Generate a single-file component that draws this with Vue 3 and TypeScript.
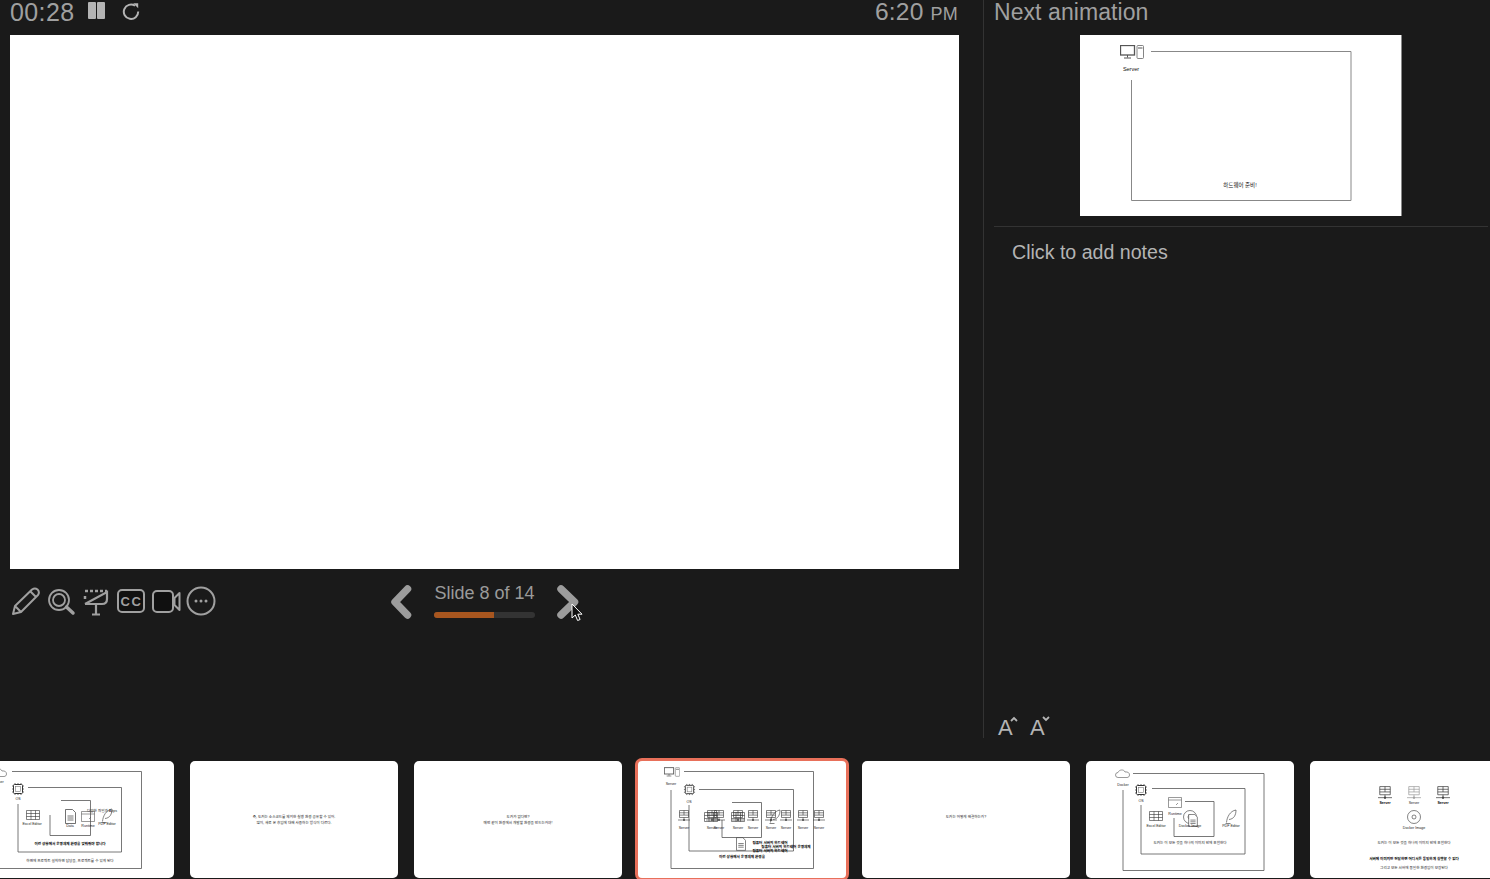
<script setup lang="ts">
const plainSlides = [
  { lines: ['즉, 도커는 소스코드를 제외한 실행 환경 공유할 수 있어.', '많이, 새로 온 후임에 대해 사용하는 방식이 다르다.'] },
  { lines: ['도커가 없다면?', '매번 같이 환경에서 개발할 환경을 만드는거야!'] },
]
const stackedServers = [40, 68, 75, 94, 109, 127, 142, 159, 175]
</script>

<template>
  <div class="presenter">
    <!-- shared icons for the slide thumbnails -->
    <svg class="defs" width="0" height="0" aria-hidden="true">
      <symbol id="monitor" viewBox="0 0 24 14">
        <rect x="0.5" y="0.5" width="14" height="9.5" fill="none" stroke="#555" stroke-width="1.3" />
        <path d="M7.5 10v2.5M4 13h7" stroke="#555" fill="none" />
        <rect x="17" y="0.5" width="6.5" height="13" rx="1" fill="none" stroke="#666" stroke-width="0.8" />
        <path d="M18 3h4.5" stroke="#555" />
      </symbol>
      <symbol id="chip" viewBox="0 0 14 14">
        <rect x="2.5" y="2.5" width="9" height="9" rx="1" fill="none" stroke="#333" />
        <rect x="4.5" y="4.5" width="5" height="5" fill="none" stroke="#777" stroke-width="0.6" />
        <path d="M1 4h1M1 7h1M1 10h1M12 4h1M12 7h1M12 10h1M4 1v1M7 1v1M10 1v1M4 12v1M7 12v1M10 12v1" stroke="#333" stroke-width="0.7" />
      </symbol>
      <symbol id="grid" viewBox="0 0 14 10">
        <path d="M.5.5h13v9H.5zM.5 3.500h13M.5 6.500h13M5 .5v9M9.500.5v9" fill="none" stroke="#333" stroke-width="0.6" />
      </symbol>
      <symbol id="doc" viewBox="0 0 11 15">
        <path d="M.5.5h7l3 3v11H.5z" fill="#fff" stroke="#333" stroke-width="0.7" />
        <path d="M2.500 7h6M2.500 9h6M2.500 11h6" stroke="#666" stroke-width="0.9" />
      </symbol>
      <symbol id="window" viewBox="0 0 14 11">
        <path d="M.5.5h13v10H.5zM.5 3h13" fill="none" stroke="#555" stroke-width="0.6" />
        <path d="M8 8l2-2" stroke="#555" stroke-width="0.6" />
      </symbol>
      <symbol id="feather" viewBox="0 0 12 15">
        <path d="M1.500 13.500C2 8 5 2 11 1c0 5-2 9-7 9.500M0.500 14.500h5" fill="none" stroke="#333" stroke-width="0.6" />
      </symbol>
      <symbol id="cloud" viewBox="0 0 15 9">
        <path d="M3 8.500a2.500 2.500 0 0 1 0-5C4 .5 9 0 10 3c3-.5 4.500 1 4.500 3 0 1.500-1 2.500-2.500 2.500z" fill="none" stroke="#555" stroke-width="0.6" />
      </symbol>
      <symbol id="disc" viewBox="0 0 14 14">
        <circle cx="7" cy="7" r="6.500" fill="none" stroke="#333" stroke-width="0.6" />
        <circle cx="7" cy="7" r="2" fill="none" stroke="#333" stroke-width="0.6" />
      </symbol>
      <symbol id="server" viewBox="0 0 12 12">
        <path d="M1.500.5h9v7h-9zM1.500 2.800h9M1.500 5.100h9M6 .5v4.600M6 7.500v2M0 10h12" fill="none" stroke="#333" stroke-width="0.6" />
        <circle cx="6" cy="10" r="1" fill="#444" />
      </symbol>
    </svg>

    <div class="main">
      <section class="stage">
        <header class="stage-head">
          <div class="timer">
            <span class="clock">00:28</span>
            <span class="pause"><i></i><i></i></span>
            <svg class="restart" width="18" height="18" viewBox="0 0 20 20">
              <path d="M14.500 4.200A8 8 0 1 0 18 10.500" fill="none" stroke="#b4b4b4" stroke-width="2.200" />
              <path d="M12.500 1.500h5.500v5.500z" fill="#b4b4b4" />
            </svg>
          </div>
          <div class="time">6:20 <small>PM</small></div>
        </header>

        <div class="slide"></div>

        <div class="controls">
          <div class="tools">
            <svg width="30" height="32" viewBox="0 0 30 32">
              <path d="M2 29l2-8L21 4.500q3-2 5.500 0 2.500 2.500.5 5.500L10 27zM19.500 6.500l5.500 5.500M4 21l6 6" fill="#1a1a1a" stroke="#a0a0a0" stroke-width="2" stroke-linejoin="round" />
            </svg>
            <svg width="30" height="32" viewBox="0 0 30 32">
              <circle cx="13" cy="15" r="10" fill="none" stroke="#a0a0a0" stroke-width="1.800" />
              <circle cx="13" cy="15" r="6" fill="none" stroke="#a0a0a0" stroke-width="1.800" />
              <path d="M20.500 22l6.500 6" stroke="#a0a0a0" stroke-width="3.500" stroke-linecap="round" />
            </svg>
            <svg width="30" height="32" viewBox="0 0 30 32">
              <path d="M4 6h22M4 11v3" fill="none" stroke="#a0a0a0" stroke-width="2.500" stroke-dasharray="3 2" />
              <path d="M4 19L26 7v7q0 5-5 5H4M15 19v10M11 29.500h8" fill="none" stroke="#a0a0a0" stroke-width="2.200" />
            </svg>
            <svg width="30" height="32" viewBox="0 0 30 32">
              <rect x="2" y="5" width="26" height="22" rx="4" fill="#111" stroke="#a0a0a0" stroke-width="2" />
              <text class="cc" x="15.500" y="20.500" text-anchor="middle">CC</text>
            </svg>
            <svg width="30" height="32" viewBox="0 0 30 32">
              <rect x="2" y="6" width="20" height="21" rx="4" fill="#101010" stroke="#a0a0a0" stroke-width="2" />
              <path d="M23.500 13l5-5v17l-5-5z" fill="#101010" stroke="#a0a0a0" stroke-width="2" stroke-linejoin="round" />
            </svg>
            <svg width="30" height="32" viewBox="0 0 30 32">
              <circle cx="15" cy="16" r="13.500" fill="none" stroke="#a0a0a0" stroke-width="2" />
              <circle cx="10" cy="16" r="1.500" fill="#a0a0a0" />
              <circle cx="15" cy="16" r="1.500" fill="#a0a0a0" />
              <circle cx="20" cy="16" r="1.500" fill="#a0a0a0" />
            </svg>
          </div>

          <nav class="pager">
            <svg width="24" height="36" viewBox="0 0 24 36">
              <path d="M17.500 5L5 18l12.500 13" fill="none" stroke="#9c9c9c" stroke-width="7.500" stroke-linecap="round" stroke-linejoin="round" />
            </svg>
            <div class="progress">
              <div class="progress-label">Slide 8 of 14</div>
              <div class="progress-track"><div class="progress-fill"></div></div>
            </div>
            <svg class="next-arrow" width="24" height="36" viewBox="0 0 24 36">
              <path d="M5 5l13.500 13L5 31" fill="none" stroke="#9c9c9c" stroke-width="7.500" stroke-linecap="round" stroke-linejoin="round" />
            </svg>
            <svg class="cursor" width="13" height="19" viewBox="0 0 13 19">
              <path d="M1 1v14l3.300-3 2.300 5.500 2.500-1-2.300-5.300H11z" fill="#111" stroke="#fff" stroke-width="1" />
            </svg>
          </nav>
        </div>
      </section>

      <aside class="side">
        <div class="side-title">Next animation</div>
        <svg class="next" width="322" height="181" viewBox="0 0 322 181">
          <rect width="322" height="181" fill="#fff" />
          <path d="M321.500 0v181" stroke="#888" />
          <use href="#monitor" x="40" y="10" width="24" height="14" />
          <text class="next-text" x="51" y="36" text-anchor="middle">Server</text>
          <path d="M71 16.500h200V165.500H51.500V45" fill="none" stroke="#888" />
          <text class="next-text" x="160" y="152" text-anchor="middle">하드웨어 준비!</text>
        </svg>
        <div class="notes">Click to add notes</div>
        <div class="font-sizes">
          <span class="font-btn">A<svg width="8" height="6" viewBox="0 0 8 6"><path d="M1 5l3-3 3 3" fill="none" stroke="#b4b4b4" stroke-width="1.800" /></svg></span>
          <span class="font-btn">A<svg width="8" height="6" viewBox="0 0 8 6"><path d="M1 1l3 3 3-3" fill="none" stroke="#b4b4b4" stroke-width="1.800" /></svg></span>
        </div>
      </aside>
    </div>

    <div class="film">
      <!-- 6 -->
      <svg class="thumb" viewBox="0 0 208 117">
        <use href="#cloud" x="26" y="7" width="15" height="9" />
        <text class="t" x="32" y="22" text-anchor="middle">Docker</text>
        <path d="M46 10.500h129.500v97H18M62 26.500h93.500v64.500H52V43M95 39.500h29.500v35H84V54" fill="none" stroke="#555" stroke-width="0.8" />
        <use href="#chip" x="45" y="21" width="14" height="14" />
        <text class="t" x="52" y="39" text-anchor="middle">OS</text>
        <use href="#grid" x="60" y="49" width="14" height="10" />
        <text class="t" x="66" y="64" text-anchor="middle">Excel Editor</text>
        <use href="#doc" x="99" y="48" width="11" height="15" />
        <text class="t" x="104" y="66" text-anchor="middle">Data</text>
        <use href="#window" x="115" y="50" width="14" height="11" />
        <text class="t" x="122" y="66" text-anchor="middle">Runtime</text>
        <use href="#feather" x="135" y="47" width="12" height="15" />
        <text class="t" x="141" y="64" text-anchor="middle">PDF Editor</text>
        <text class="t" x="136" y="51" text-anchor="middle">다양한 파일과 Apps</text>
        <text class="t bold" x="104" y="84" text-anchor="middle">이런 상황에서 운영체제 환경을 맞춰줘야 합니다</text>
        <text class="t" x="104" y="101" text-anchor="middle">하면에 프로젝트 설치하면 담당을, 프로젝트를 수 있게 된다</text>
      </svg>

      <svg v-for="(s, i) in plainSlides" :key="i" class="thumb" viewBox="0 0 208 117">
        <text class="t" x="104" y="57" text-anchor="middle">{{ s.lines[0] }}</text>
        <text class="t" x="104" y="63" text-anchor="middle">{{ s.lines[1] }}</text>
      </svg>

      <!-- current slide -->
      <svg class="thumb current" viewBox="0 0 208 117">
        <use href="#monitor" x="26" y="6" width="16" height="10" />
        <text class="t" x="33" y="24" text-anchor="middle">Server</text>
        <path d="M46 10.500h129.500v97H33V29M61 28.500h94.500v61.500H51V44M94 41.500h29.500v35H84V59" fill="none" stroke="#555" stroke-width="0.8" />
        <use href="#chip" x="45" y="22" width="13" height="13" />
        <text class="t" x="51" y="42" text-anchor="middle">OS</text>
        <template v-for="x in stackedServers" :key="x">
          <use href="#server" :x="x" y="49" width="12" height="12" />
          <text class="t" :x="x + 6" y="68" text-anchor="middle">Server</text>
        </template>
        <use href="#grid" x="66" y="51" width="14" height="10" />
        <use href="#grid" x="93" y="51" width="14" height="10" />
        <use href="#feather" x="131" y="48" width="12" height="15" />
        <use href="#doc" x="98" y="76" width="10" height="14" />
        <text class="t bold" x="132" y="83" text-anchor="middle">컴퓨터 서버의 하드웨어</text>
        <text class="t bold" x="148" y="87" text-anchor="middle">컴퓨터 서버의 하드웨어 운영체제</text>
        <text class="t bold" x="132" y="91" text-anchor="middle">컴퓨터 서버의 하드웨어</text>
        <text class="t bold" x="104" y="97" text-anchor="middle">이런 상황에서 운영체제 환경을</text>
      </svg>

      <svg class="thumb" viewBox="0 0 208 117">
        <text class="t" x="104" y="57" text-anchor="middle">도커는 어떻게 해결하는가?</text>
      </svg>

      <svg class="thumb" viewBox="0 0 208 117">
        <use href="#cloud" x="29" y="8" width="15" height="9" />
        <text class="t" x="37" y="25" text-anchor="middle">Docker</text>
        <path d="M47 12.500h131v97H37V29M66 27.500h93v65.500H55V44M99 40.500h29v35H88V57" fill="none" stroke="#555" stroke-width="0.8" />
        <use href="#chip" x="48" y="22" width="14" height="14" />
        <text class="t" x="55" y="41" text-anchor="middle">OS</text>
        <use href="#window" x="82" y="36" width="14" height="11" />
        <text class="t" x="89" y="54" text-anchor="middle">Runtime</text>
        <use href="#grid" x="63" y="50" width="14" height="10" />
        <text class="t" x="70" y="66" text-anchor="middle">Excel Editor</text>
        <use href="#disc" x="97" y="49" width="14" height="14" />
        <use href="#doc" x="102" y="53" width="10" height="13" />
        <text class="t" x="104" y="66" text-anchor="middle">Docker Image</text>
        <use href="#feather" x="139" y="48" width="12" height="15" />
        <text class="t" x="145" y="66" text-anchor="middle">PDF Editor</text>
        <text class="t" x="104" y="83" text-anchor="middle">도커는 이 모든 것을 하나의 이미지 안에 포함한다</text>
      </svg>

      <svg class="thumb" viewBox="0 0 208 117">
        <use href="#server" x="68" y="25" width="14" height="14" />
        <use href="#server" class="faded" x="97" y="25" width="14" height="14" />
        <use href="#server" x="126" y="25" width="14" height="14" />
        <text class="t bold" x="75" y="43" text-anchor="middle">Server</text>
        <text class="t" x="104" y="43" text-anchor="middle">Server</text>
        <text class="t bold" x="133" y="43" text-anchor="middle">Server</text>
        <use href="#disc" x="97" y="49" width="14" height="14" />
        <text class="t" x="104" y="68" text-anchor="middle">Docker Image</text>
        <text class="t" x="104" y="83" text-anchor="middle">도커는 이 모든 것을 하나의 이미지 안에 포함한다</text>
        <text class="t bold" x="104" y="99" text-anchor="middle">서버에 이미지만 전달하면 어디서든 동일하게 실행할 수 있다</text>
        <text class="t" x="104" y="108" text-anchor="middle">그리고 모든 서버에 동일한 환경임이 보장된다</text>
      </svg>
    </div>
  </div>
</template>

<style scoped>
.presenter {
  width: 1490px;
  height: 879px;
  background: #1a1a1a;
  display: flex;
  flex-direction: column;
  overflow: hidden;
  font-family: "Liberation Sans", "Noto Sans CJK KR", sans-serif;
  color: #a0a0a0;
}

.defs {
  position: absolute;
}

.main {
  display: flex;
  height: 738px;
}

.stage {
  width: 984px;
  flex: none;
  box-sizing: border-box;
  border-right: 1px solid #333;
}

.stage-head {
  height: 35px;
  box-sizing: border-box;
  padding: 0 25px 0 10px;
  display: flex;
  justify-content: space-between;
  align-items: flex-start;
}

.timer {
  display: flex;
  align-items: center;
  height: 24px;
}

.clock {
  font-size: 25px;
  letter-spacing: 0.4px;
  line-height: 24px;
  width: 78px;
}

.pause {
  display: flex;
  gap: 1px;
  width: 34px;
  margin-top: -3px;
}

.pause i {
  width: 8px;
  height: 17px;
  border-radius: 1px;
  background: #b4b4b4;
}

.restart {
  margin-top: -3px;
}

.time {
  font-size: 24.600px;
  letter-spacing: 0.2px;
  line-height: 24px;
}

.time small {
  font-size: 18px;
}

.slide {
  width: 949px;
  height: 534px;
  margin-left: 10px;
  background: #fff;
}

.controls {
  display: flex;
  padding: 15px 0 0 11px;
}

.tools {
  display: flex;
  gap: 5px;
  margin-top: 1px;
  height: 32px;
}

.cc {
  font-size: 13px;
  font-weight: 700;
  letter-spacing: 1.5px;
  fill: #a0a0a0;
}

.pager {
  position: relative;
  display: flex;
  gap: 20px;
  margin-left: 174px;
}

.progress {
  width: 101px;
}

.next-arrow {
  margin-left: 1px;
}

.progress-label {
  font-size: 18px;
  line-height: 18px;
  text-align: center;
  white-space: nowrap;
  color: #9a9a9a;
}

.progress-track {
  margin-top: 10px;
  height: 6px;
  border-radius: 3px;
  background: #333;
  overflow: hidden;
}

.progress-fill {
  width: 60px;
  height: 100%;
  background: #a8561f;
}

.cursor {
  position: absolute;
  left: 181px;
  top: 19px;
}

.side {
  flex: 1;
  padding-left: 10px;
  display: flex;
  flex-direction: column;
}

.side-title {
  height: 35px;
  font-size: 23px;
  letter-spacing: 0.07px;
  line-height: 24px;
}

.next {
  display: block;
  margin-left: 86px;
  flex: none;
}

.next-text {
  font-size: 5.500px;
  fill: #111;
}

.notes {
  flex: 1;
  margin: 10px 2px 0 0;
  padding: 14px 0 0 18px;
  border-top: 1px solid #333;
  font-size: 19.600px;
  line-height: 23px;
  color: #b4b4b4;
}

.font-sizes {
  display: flex;
  gap: 12px;
  padding: 0 0 0 4px;
}

.font-btn {
  display: flex;
  width: 20px;
  font-size: 22px;
  line-height: 20px;
  color: #b4b4b4;
}

.font-btn svg {
  margin: -2px 0 0 -3px;
}

.film {
  display: flex;
  gap: 16px;
  margin-left: -34px;
  padding-top: 23px;
}

.thumb {
  flex: none;
  width: 208px;
  height: 117px;
  background: #fff;
  border-radius: 5px;
}

.current {
  box-shadow: 0 0 0 3px #e8705a;
  border-radius: 4px;
}

.t {
  font-size: 3.600px;
  fill: #222;
}

.bold {
  font-weight: 700;
  fill: #000;
}

.faded {
  opacity: 0.5;
}
</style>
